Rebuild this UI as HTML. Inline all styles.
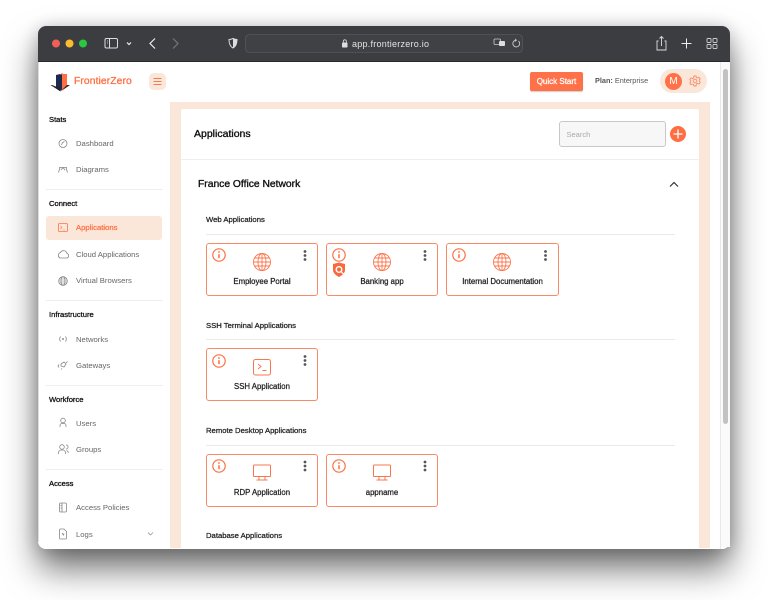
<!DOCTYPE html>
<html><head><meta charset="utf-8"><style>
html,body{margin:0;padding:0;width:768px;height:600px;overflow:hidden;background:#fff}
#r{position:absolute;left:0;top:0;width:768px;height:600px;overflow:hidden;filter:blur(.3px);font-family:"Liberation Sans",sans-serif}
.a,.t{position:absolute}
.t{white-space:nowrap;line-height:12px}
.win{position:absolute;left:38px;top:26px;width:692px;height:523px;border-radius:8px;box-shadow:0 20px 34px rgba(0,0,0,.55),0 2px 18px rgba(0,0,0,.22)}
.clip{position:absolute;left:38px;top:26px;width:692px;height:523px;border-radius:8px;overflow:hidden;background:#fff}
.sec{font-size:7.600px;color:#111;left:49px;-webkit-text-stroke:.3px #111}
.it{font-size:7.700px;color:#666;left:76px}
.dv{position:absolute;left:46px;width:117px;height:1px;background:#eee}
.h{font-size:7.700px;color:#222;left:206px;-webkit-text-stroke:.25px #222}
.hr{position:absolute;left:206px;width:469px;height:1px;background:#e9e9e9}
.card{position:absolute;width:110px;height:51px;border:1.2px solid #f98a66;border-radius:3px;background:#fff}
.card .n{position:absolute;left:0;right:0;top:32px;text-align:center;font-size:7.800px;color:#222;line-height:12px;-webkit-text-stroke:.25px #222}
svg{position:absolute;overflow:visible}
</style></head><body><div id="r">
<div class="win"></div>
<div class="clip">
<div class="a" style="left:0;top:0;width:692px;height:36px;background:#3c3d40;border-bottom:1px solid #2a2a2c;box-sizing:border-box"></div>
</div>

<!-- toolbar icons -->
<svg style="left:0;top:0" width="768" height="62" fill="none">
<circle cx="56" cy="43.5" r="4" fill="#f25f58"/><circle cx="69.500" cy="43.5" r="4" fill="#fbbc2e"/><circle cx="83" cy="43.5" r="4" fill="#29c840"/>
<rect x="105" y="38.500" width="12.500" height="9.500" rx="1.500" stroke="#ddd"/><path d="M109.500 38.500v9.500" stroke="#ddd"/><path d="M107 41h1M107 43h1" stroke="#ddd" stroke-width=".7"/>
<path d="M127 42.500l2 2 2-2" stroke="#eee" stroke-width="1.200"/>
<path d="M155 38.500l-5 5 5 5" stroke="#eee" stroke-width="1.200"/>
<path d="M173 38.500l5 5-5 5" stroke="#777" stroke-width="1.200"/>
<path d="M229 39.500c1.500 0 3-.5 4-1 1 .5 2.500 1 4 1 0 4-1 7-4 8.500-3-1.500-4-4.500-4-8.500z" stroke="#ddd"/><path d="M233 38.500c1 .5 2.500 1 4 1 0 4-1 7-4 8.500z" fill="#ddd"/>
<rect x="245.500" y="34.500" width="277" height="18" rx="4" fill="#404145" stroke="#55565a" stroke-width=".8"/>
<rect x="342" y="42.500" width="5.500" height="5" rx=".8" fill="#ddd"/><path d="M343.300 42.500v-1.200a1.500 1.500 0 0 1 3 0v1.200" stroke="#ddd" stroke-width=".8"/>
<rect x="494" y="39" width="6.500" height="5.500" rx="1" stroke="#ccc" stroke-width=".8"/><rect x="499" y="41" width="6" height="5" rx="1" fill="#ddd"/>
<path d="M518.500 41a3.400 3.400 0 1 1-2.800-.8" stroke="#ccc" stroke-width=".9"/><path d="M515 38.800l1.400 1.400-1.400 1.300" stroke="#ccc" stroke-width=".8"/>
<path d="M658.500 41h-1.500v9h9v-9h-1.500M661.500 46v-9M659.500 38.500l2-2 2 2" stroke="#ddd" stroke-width=".9"/>
<path d="M686.500 38.500v10M681.500 43.500h10" stroke="#eee" stroke-width="1"/>
<g stroke="#ccc" stroke-width=".9"><rect x="707" y="38.500" width="4" height="4" rx=".7"/><rect x="713" y="38.500" width="4" height="4" rx=".7"/><rect x="707" y="44.500" width="4" height="4" rx=".7"/><rect x="713" y="44.500" width="4" height="4" rx=".7"/></g>
</svg>
<div class="t" style="left:352px;top:38px;font-size:9px;color:#e4e4e4;letter-spacing:.25px">app.frontierzero.io</div>

<!-- scrollbar -->
<div class="a" style="left:720px;top:62px;width:1px;height:487px;background:#e8e8e8"></div>
<div class="a" style="left:721px;top:62px;width:9px;height:485px;background:#fafafa"></div>
<div class="a" style="left:722.500px;top:69px;width:5px;height:355px;border-radius:3px;background:#c2c2c2"></div>

<!-- logo -->
<svg style="left:50px;top:72px" width="24" height="20">
<path d="M1 13l5 2v-12l4-1v17z" fill="#1b2a4e"/><path d="M2 13h-1.500l10 6.500v-3z" fill="#222"/>
<path d="M10 2.500l2-1.500 1 1h4v13l-7 4z" fill="#ff6f43"/><path d="M10 2.500h2v15l-2 1.500z" fill="#1b2a4e"/><path d="M17 13h3l-9.500 6.500z" fill="#222"/>
</svg>
<div class="t" style="left:74px;top:75.500px;font-size:10.300px;color:#ff6f43;letter-spacing:.1px;-webkit-text-stroke:.3px #ff6f43">FrontierZero</div>
<div class="a" style="left:149px;top:73px;width:17px;height:17px;border-radius:5px;background:#fbe7d9"></div>
<svg style="left:149px;top:73px" width="17" height="17"><path d="M4.500 5.500h8M4.500 8.500h8M4.500 11.500h8" stroke="#f47a52" stroke-width="1"/></svg>

<!-- header right -->
<div class="a" style="left:530px;top:72px;width:53px;height:19px;border-radius:2px;background:#ff7249;box-shadow:0 1px 1px rgba(0,0,0,.2)"></div>
<div class="t" style="left:530px;top:75.500px;width:53px;text-align:center;font-size:8px;color:#fff;-webkit-text-stroke:.25px #fff">Quick Start</div>
<div class="t" style="left:595px;top:75px;font-size:7.300px;color:#555"><b>Plan:</b> Enterprise</div>
<div class="a" style="left:660px;top:69px;width:47px;height:24px;border-radius:12px;background:#fbe7d9"></div>
<div class="a" style="left:665px;top:73px;width:17px;height:17px;border-radius:50%;background:#ff7249;color:#fff;font-size:10px;line-height:17px;text-align:center">M</div>
<svg style="left:688px;top:74px" width="14" height="14" fill="none" stroke="#f98a66" stroke-width=".9"><circle cx="7" cy="7" r="1.800"/><path d="M6 2h2l.4 1.400 1.300.6 1.300-.7 1.200 1.500-.9 1.200v1.400l.9 1.100-1.200 1.600-1.300-.7-1.300.6L8 12H6l-.4-1.400-1.300-.6-1.300.7-1.200-1.600.9-1.100V6.600l-.9-1.200L3 3.900l1.300.7 1.300-.6z"/></svg>

<!-- main -->
<div class="a" style="left:170px;top:102px;width:540px;height:446px;background:#fbe7d9"></div>
<div class="a" style="left:181px;top:109px;width:518px;height:439px;background:#fff;border-radius:2px 2px 0 0"></div>
<div class="a" style="left:181px;top:159px;width:518px;height:1px;background:#eee"></div>
<div class="t" style="left:194px;top:127.500px;font-size:10.500px;color:#111;-webkit-text-stroke:.35px #111">Applications</div>
<div class="a" style="left:559px;top:121px;width:107px;height:26px;box-sizing:border-box;border:1px solid #c8c8c8;border-radius:3px;background:#f7f7f7"></div>
<div class="t" style="left:566.500px;top:128.500px;font-size:7.500px;color:#aaa">Search</div>
<div class="a" style="left:670px;top:126px;width:16px;height:16px;border-radius:50%;background:#ff6e42"></div>
<svg style="left:670px;top:126px" width="16" height="16"><path d="M8 3.500v9M3.500 8h9" stroke="#fff" stroke-width="1.300"/></svg>
<div class="t" style="left:198px;top:178.500px;font-size:10.300px;color:#111;-webkit-text-stroke:.35px #111">France Office Network</div>
<svg style="left:668px;top:180px" width="12" height="8" fill="none"><path d="M2 6.500l4-4 4 4" stroke="#333" stroke-width="1.200"/></svg>

<!-- sidebar -->
<div class="t sec" style="top:114px">Stats</div>
<div class="t it" style="top:137.500px">Dashboard</div>
<div class="t it" style="top:164px">Diagrams</div>
<div class="dv" style="top:189px"></div>
<div class="t sec" style="top:198px">Connect</div>
<div class="a" style="left:46px;top:216px;width:116px;height:24px;border-radius:3px;background:#fbe7d9"></div>
<div class="t it" style="top:222px;color:#ff7249;-webkit-text-stroke:.25px #ff7249">Applications</div>
<div class="t it" style="top:248.500px">Cloud Applications</div>
<div class="t it" style="top:275px">Virtual Browsers</div>
<div class="dv" style="top:300px"></div>
<div class="t sec" style="top:309px">Infrastructure</div>
<div class="t it" style="top:333.500px">Networks</div>
<div class="t it" style="top:359.500px">Gateways</div>
<div class="dv" style="top:385px"></div>
<div class="t sec" style="top:393.500px">Workforce</div>
<div class="t it" style="top:417.500px">Users</div>
<div class="t it" style="top:443.500px">Groups</div>
<div class="dv" style="top:469px"></div>
<div class="t sec" style="top:478px">Access</div>
<div class="t it" style="top:501.500px">Access Policies</div>
<div class="t it" style="top:528.500px">Logs</div>
<svg style="left:0;top:0" width="200" height="549" fill="none" stroke="#888" stroke-width=".8">
<circle cx="63" cy="143.500" r="4"/><path d="M61.500 145l1-2.500 2-1"/>
<path d="M59 167.500h8M60 167.500l-1.500 5M66 167.500l1.500 5M61 170l2-2.500 2 2.500"/>
<g stroke="#ff7249"><rect x="58.500" y="223.500" width="9" height="8" rx="1"/><path d="M60.500 226l1.500 1.500-1.500 1.500M63 230h2" stroke-width=".6"/></g>
<path d="M60 258h6.500a2.300 2.300 0 0 0 .5-4.500 3.500 3.500 0 0 0-6.500-1 3 3 0 0 0-.5 5.500z"/>
<circle cx="63" cy="281" r="4.300"/><ellipse cx="63" cy="281" rx="2" ry="4.300"/><path d="M58.700 281h8.600M59.300 279h7.400M59.300 283h7.400" stroke-width=".6"/>
<circle cx="63" cy="339" r=".6"/><path d="M60.500 336.500c-1 1.500-1 3.500 0 5M65.500 336.500c1 1.500 1 3.500 0 5"/>
<path d="M61 364l3-2 2 2-2 3-3-1zM59 364.500l-1 1.500 1 1.500M67.500 361.500l-1.500 1.500M62 368.500l-1 1"/>
<circle cx="63" cy="420.500" r="2.300"/><path d="M60 427v-1.500a2 2 0 0 1 2-2h2a2 2 0 0 1 2 2v1.500"/>
<circle cx="62" cy="447" r="2.300"/><path d="M66 445a2 2 0 0 1 0 4M58.500 454v-1.500a3 3 0 0 1 3-2.500h1a3 3 0 0 1 3 2.500v1.500M66.500 450.500c1 .3 1.800 1 1.800 2.500"/>
<rect x="59.500" y="503" width="7" height="9" rx="1.300"/><path d="M62 503v9M60.500 505.500h1M60.500 508h1"/>
<path d="M60 529h4l2.500 2.500v6.500a1 1 0 0 1-1 1h-5a1 1 0 0 1-1-1v-8z"/><path d="M62 533l1.500 2 .5-1.500"/>
<path d="M148 532.500l2.500 2.500 2.500-2.500" stroke-width=".7"/>
</svg>
<div class="a" style="left:38px;top:62px;width:1px;height:480px;background:#ddd"></div>

<!-- sections -->
<div class="t h" style="top:213.500px">Web Applications</div><div class="hr" style="top:234px"></div>
<div class="t h" style="top:319.500px">SSH Terminal Applications</div><div class="hr" style="top:339px"></div>
<div class="t h" style="top:424.500px">Remote Desktop Applications</div><div class="hr" style="top:445px"></div>
<div class="t h" style="top:529.500px">Database Applications</div>

<!-- cards -->
<div class="card" style="left:206px;top:243px"><div class="n">Employee Portal</div></div>
<div class="card" style="left:326px;top:243px"><div class="n">Banking app</div></div>
<div class="card" style="left:446px;top:243px;width:111px"><div class="n">Internal Documentation</div></div>
<div class="card" style="left:206px;top:348px"><div class="n">SSH Application</div></div>
<div class="card" style="left:206px;top:454px"><div class="n">RDP Application</div></div>
<div class="card" style="left:326px;top:454px"><div class="n">appname</div></div>

<svg style="left:0;top:0" width="768" height="600" fill="none">
<defs>
<g id="i"><circle cx="0" cy="0" r="6.200" stroke="#ff6e42" stroke-width="1.200"/><path d="M0-.8v4" stroke="#ff6e42" stroke-width="1.500"/><circle cx="0" cy="-3" r=".9" fill="#ff6e42"/></g>
<g id="d" fill="#555"><circle cx="0" cy="-4" r="1.400"/><circle cx="0" cy="0" r="1.400"/><circle cx="0" cy="4" r="1.400"/></g>
<g id="w" stroke="#f9774d" stroke-width=".9"><circle cx="0" cy="0" r="8.500"/><ellipse cx="0" cy="0" rx="4" ry="8.500"/><path d="M0-8.500v17M-8.500 0h17M-7.500-4h15M-7.500 4h15"/></g>
<g id="m" stroke="#f9774d" stroke-width="1"><rect x="-8.500" y="-7" width="17" height="11.500" rx=".8"/><path d="M-3 4.500v3.500M3 4.500v3.500M-5.500 8h11"/></g>
</defs>
<use href="#i" x="219" y="255"/><use href="#d" x="305" y="255.500"/><use href="#w" x="262" y="262"/>
<use href="#i" x="339" y="255"/><use href="#d" x="425" y="255.500"/><use href="#w" x="382" y="262"/>
<use href="#i" x="459" y="255"/><use href="#d" x="545.500" y="255.500"/><use href="#w" x="502" y="262"/>
<use href="#i" x="219" y="361"/><use href="#d" x="305" y="360.500"/>
<rect x="253.500" y="359.500" width="17" height="15.500" rx="2" stroke="#f9774d"/><path d="M258 364l3 2.500-3 2.500M262.500 370.500h4" stroke="#f9774d" stroke-width=".9"/>
<use href="#i" x="219" y="466"/><use href="#d" x="305" y="466"/><use href="#m" x="262" y="472"/>
<use href="#i" x="339" y="466"/><use href="#d" x="425" y="466"/><use href="#m" x="382" y="472"/>
<path d="M333 264l6-1.500 6 1.500v6c0 3-3 5.500-6 7-3-1.500-6-4-6-7z" fill="#f9693d"/>
<circle cx="339" cy="269.500" r="2.800" stroke="#fff" stroke-width="1.400"/><path d="M341 271.500l2.500 2.500" stroke="#fff" stroke-width="1.200"/>
</svg>
</div></body></html>
